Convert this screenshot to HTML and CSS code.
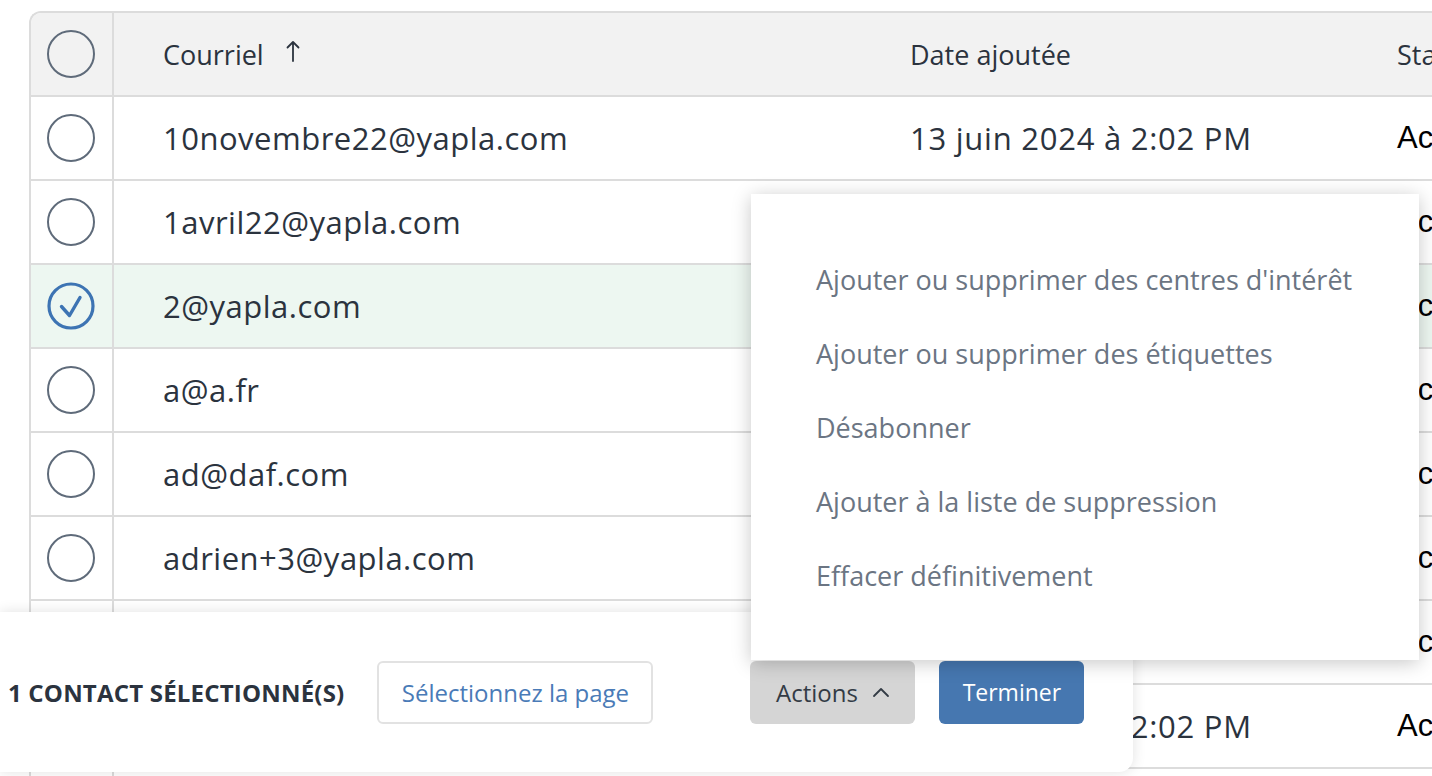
FILE: index.html
```html
<!DOCTYPE html>
<html lang="fr">
<head>
<meta charset="utf-8">
<title>Contacts</title>
<link rel="stylesheet" href="styles.css">
</head>
<body>
<div class="page">
  <div class="table">
    <div class="row head">
      <div class="cell check"><span class="radio"></span></div>
      <div class="cell email">Courriel<svg class="sort" width="14" height="22" viewBox="0 0 14 22"><path d="M7 21V2M1.5 7.5L7 2l5.5 5.5" fill="none" stroke="#2b333e" stroke-width="1.8" stroke-linecap="round" stroke-linejoin="round"/></svg></div>
      <div class="cell date">Date ajoutée</div>
      <div class="cell status">Statut</div>
    </div>
    <div class="row">
      <div class="cell check"><span class="radio"></span></div>
      <div class="cell email">10novembre22@yapla.com</div>
      <div class="cell date">13 juin 2024 à 2:02 PM</div>
      <div class="cell status val">Actif</div>
    </div>
    <div class="row">
      <div class="cell check"><span class="radio"></span></div>
      <div class="cell email">1avril22@yapla.com</div>
      <div class="cell date">13 juin 2024 à 2:02 PM</div>
      <div class="cell status val">Actif</div>
    </div>
    <div class="row selected">
      <div class="cell check"><svg class="radio-on" width="48" height="48" viewBox="0 0 48 48"><circle cx="24" cy="24" r="22" fill="none" stroke="#3d74b3" stroke-width="3.2"/><path d="M14.5 24.5L22.5 33.5L33 15.5" fill="none" stroke="#3d74b3" stroke-width="3.4" stroke-linecap="round" stroke-linejoin="round"/></svg></div>
      <div class="cell email">2@yapla.com</div>
      <div class="cell date">13 juin 2024 à 2:02 PM</div>
      <div class="cell status val">Actif</div>
    </div>
    <div class="row">
      <div class="cell check"><span class="radio"></span></div>
      <div class="cell email">a@a.fr</div>
      <div class="cell date">13 juin 2024 à 2:02 PM</div>
      <div class="cell status val">Actif</div>
    </div>
    <div class="row">
      <div class="cell check"><span class="radio"></span></div>
      <div class="cell email">ad@daf.com</div>
      <div class="cell date">13 juin 2024 à 2:02 PM</div>
      <div class="cell status val">Actif</div>
    </div>
    <div class="row">
      <div class="cell check"><span class="radio"></span></div>
      <div class="cell email">adrien+3@yapla.com</div>
      <div class="cell date">13 juin 2024 à 2:02 PM</div>
      <div class="cell status val">Actif</div>
    </div>
    <div class="row">
      <div class="cell check"><span class="radio"></span></div>
      <div class="cell email">adrien+4@yapla.com</div>
      <div class="cell date">13 juin 2024 à 2:02 PM</div>
      <div class="cell status val">Actif</div>
    </div>
    <div class="row">
      <div class="cell check"><span class="radio"></span></div>
      <div class="cell email">adrien@yapla.com</div>
      <div class="cell date">13 juin 2024 à 2:02 PM</div>
      <div class="cell status val">Actif</div>
    </div>
    <div class="row">
      <div class="cell check"><span class="radio"></span></div>
      <div class="cell email">alice@yapla.com</div>
      <div class="cell date">13 juin 2024 à 2:02 PM</div>
      <div class="cell status val">Actif</div>
    </div>
  </div>

  <div class="menu">
    <div class="menu-item">Ajouter ou supprimer des centres d'intérêt</div>
    <div class="menu-item">Ajouter ou supprimer des étiquettes</div>
    <div class="menu-item">Désabonner</div>
    <div class="menu-item">Ajouter à la liste de suppression</div>
    <div class="menu-item">Effacer définitivement</div>
  </div>

  <div class="footer">
    <span class="count">1 CONTACT SÉLECTIONNÉ(S)</span>
    <button class="btn btn-outline">Sélectionnez la page</button>
    <button class="btn btn-actions">Actions <svg class="caret" width="18" height="12" viewBox="0 0 18 12"><path d="M2 10L9 3l7 7" fill="none" stroke="#333b45" stroke-width="1.8" stroke-linecap="round" stroke-linejoin="round"/></svg></button>
    <button class="btn btn-primary">Terminer</button>
  </div>
</div>
</body>
</html>
```

FILE: styles.css
```css
* { box-sizing: border-box; }
html, body { margin: 0; padding: 0; }
body {
  background: #ffffff;
  font-family: "Open Sans", "Noto Sans", sans-serif;
  color: #2b333e;
  width: 1432px;
  height: 776px;
  overflow: hidden;
}
.page {
  position: relative;
  width: 1432px;
  height: 776px;
  overflow: hidden;
  padding-top: 11px;
}
.table {
  margin-left: 29px;
  width: 1500px;
  border-left: 2px solid #dcdcdc;
  border-top: 2px solid #dcdcdc;
  border-top-left-radius: 12px;
  overflow: hidden;
}
.row {
  display: grid;
  grid-template-columns: 83px 746px 487px 300px;
  height: 84px;
  border-bottom: 2px solid #dcdcdc;
  font-size: 31px;
  background: #ffffff;
}
.row.head {
  background: #f2f2f2;
  font-size: 27px;
}
.row.selected { background: #edf7f1; }
.cell {
  display: flex;
  align-items: center;
  white-space: nowrap;
}
.cell.check {
  justify-content: center;
  border-right: 2px solid #dcdcdc;
  padding-right: 1px;
}
.cell.email { padding-left: 49px; letter-spacing: 0.5px; }
.cell.date { padding-left: 50px; letter-spacing: 0.75px; }
.row.head .cell.email,
.row.head .cell.date { letter-spacing: 0; }
.cell.status { padding-left: 50px; }
.cell.status.val {
  font-family: "Liberation Sans", Arial, sans-serif;
  font-size: 31px;
  letter-spacing: 0;
  color: #000000;
}
.radio {
  display: block;
  width: 48px;
  height: 48px;
  border: 2px solid #5f6b7a;
  border-radius: 50%;
}
.radio-on { display: block; }
.sort { margin-left: 22px; margin-top: -6px; }

.menu {
  position: absolute;
  left: 751px;
  top: 194px;
  width: 668px;
  height: 466px;
  background: #ffffff;
  box-shadow: 0 3px 18px rgba(0, 0, 0, 0.22);
  padding: 49px 0 47px;
  z-index: 3;
}
.menu-item {
  height: 74px;
  line-height: 74px;
  padding-left: 65px;
  font-size: 27px;
  color: #6b7583;
  white-space: nowrap;
}

.footer {
  position: absolute;
  left: 0;
  top: 612px;
  width: 1133px;
  height: 160px;
  background: #ffffff;
  border-bottom-right-radius: 14px;
  box-shadow: 0 0 14px rgba(0, 0, 0, 0.12);
  display: flex;
  align-items: center;
  padding-left: 8px;
  z-index: 2;
}
.count {
  font-weight: 700;
  font-size: 24px;
  letter-spacing: 0.2px;
  color: #2b333e;
  white-space: nowrap;
  margin-right: 33px;
}
.btn {
  height: 63px;
  border-radius: 6px;
  font-family: "Open Sans", "Noto Sans", sans-serif;
  font-size: 24px;
  display: flex;
  align-items: center;
  justify-content: center;
  padding: 0;
  cursor: pointer;
}
.btn-outline {
  width: 276px;
  background: #ffffff;
  border: 2px solid #e2e2e2;
  color: #4a7bb7;
  margin-right: 97px;
}
.btn-actions {
  width: 165px;
  background: #d5d5d5;
  border: none;
  color: #333b45;
  margin-right: 24px;
  gap: 14px;
}
.btn-primary {
  width: 145px;
  background: #4677b0;
  border: none;
  color: #ffffff;
  font-size: 23px;
}
```
